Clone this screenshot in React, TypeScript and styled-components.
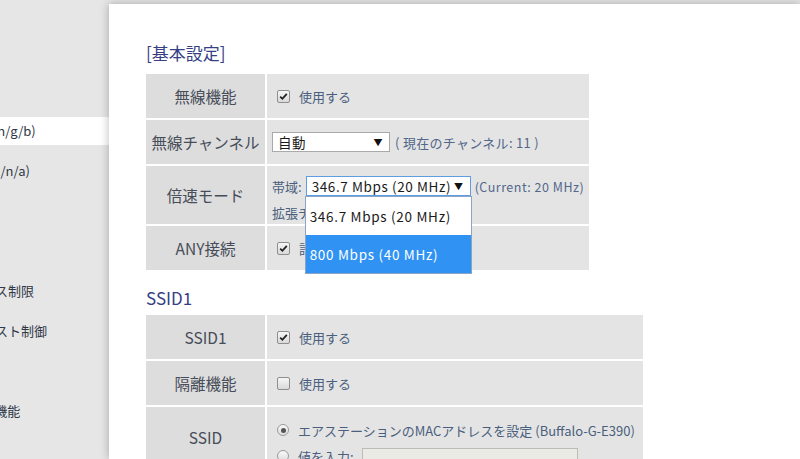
import React from "react";
import styled, { createGlobalStyle } from "styled-components";

const GlobalStyle = createGlobalStyle`
  html, body {
    margin: 0;
    padding: 0;
  }
  body {
    background: #e6e6e6;
    font-family: "Noto Sans CJK JP", "Noto Sans", sans-serif;
    overflow: hidden;
  }
`;

const menuItems = [
  "2.4 GHz (11n/g/b)",
  "5 GHz (11ac/n/a)",
  "WPS",
  "AOSS",
  "MACアクセス制限",
  "マルチキャスト制御",
  "WDS",
  "ECOモード機能",
];

const Page = styled.div`
  display: flex;
  height: 459px;
  overflow: hidden;
`;

const Sidebar = styled.nav`
  width: 109px;
  flex-shrink: 0;
  display: flex;
  justify-content: flex-end;
  overflow: hidden;
  padding-top: 117px;
`;

const MenuList = styled.ul`
  width: 179px;
  flex-shrink: 0;
  margin: 0;
  padding: 0;
  list-style: none;
  display: flex;
  flex-direction: column;
  gap: 12px;
`;

const MenuItem = styled.li<{ $active?: boolean }>`
  height: 28px;
  line-height: 28px;
  font-size: 13px;
  white-space: nowrap;
  color: #2f3747;
  background: ${({ $active }) => ($active ? "#ffffff" : "transparent")};
`;

const Main = styled.main`
  flex: 1;
  margin-top: 4px;
  background: #ffffff;
  box-shadow: 0 0 9px rgba(0, 0, 0, 0.28);
  padding: 37px 0 0 37px;
  position: relative;
  z-index: 1;
`;

const SectionTitle = styled.h2<{ $spaced?: boolean }>`
  margin: ${({ $spaced }) => ($spaced ? "16px 0 5px" : "0 0 9px")};
  font-size: 17px;
  line-height: 24px;
  font-weight: normal;
  color: #363f86;
`;

const Table = styled.div<{ $width: number }>`
  display: grid;
  grid-template-columns: 119px 1fr;
  gap: 2px;
  width: ${({ $width }) => $width}px;
`;

const HeadCell = styled.div`
  background: #dddddd;
  display: flex;
  align-items: center;
  justify-content: center;
  min-height: 44px;
  font-size: 15.5px;
  color: #464c58;
`;

const ValueCell = styled.div<{ $pad?: string }>`
  background: #e4e4e4;
  display: flex;
  flex-direction: column;
  justify-content: center;
  min-height: 44px;
  padding: ${({ $pad }) => $pad || "0 5px"};
  box-sizing: border-box;
  font-size: 13px;
  color: #4a5f7d;
`;

const Line = styled.div<{ $gap?: number }>`
  display: flex;
  align-items: center;
  height: 22px;
  gap: ${({ $gap }) => $gap ?? 0}px;
  white-space: nowrap;
`;

const Stack = styled.div`
  display: flex;
  flex-direction: column;
  gap: 4px;
`;

const Box = styled.span`
  width: 13px;
  height: 13px;
  margin-left: 5px;
  margin-right: 9px;
  box-sizing: border-box;
  border: 1px solid #8e8e8e;
  border-radius: 2px;
  background: linear-gradient(#f6f6f6, #d9d9d9);
  display: inline-flex;
  align-items: center;
  justify-content: center;
  flex-shrink: 0;
`;

const RadioDot = styled.span<{ $on?: boolean }>`
  width: 12px;
  height: 12px;
  margin-left: 5px;
  margin-right: 9px;
  box-sizing: border-box;
  border: 1px solid #9a9a9a;
  border-radius: 50%;
  background: linear-gradient(#f8f8f8, #dedede);
  display: inline-flex;
  align-items: center;
  justify-content: center;
  flex-shrink: 0;

  &::after {
    content: "";
    display: ${({ $on }) => ($on ? "block" : "none")};
    width: 5px;
    height: 5px;
    border-radius: 50%;
    background: #555;
  }
`;

const SelectWrap = styled.div`
  position: relative;
  display: inline-flex;
`;

const SelectBox = styled.div<{ $width: number; $focus?: boolean }>`
  width: ${({ $width }) => $width}px;
  height: 20px;
  box-sizing: border-box;
  border: 1px solid ${({ $focus }) => ($focus ? "#5e9de2" : "#a9a9a9")};
  background: #ffffff;
  display: flex;
  align-items: center;
  justify-content: space-between;
  padding: 0 6px 0 5px;
  font-size: 13.5px;
  letter-spacing: 0.6px;
  color: #1a1a1a;
`;

const Arrow = styled.span`
  font-size: 9px;
  color: #111;
`;

const Dropdown = styled.ul`
  position: absolute;
  top: 100%;
  left: -1px;
  width: 167px;
  margin: 0;
  padding: 0;
  list-style: none;
  box-sizing: border-box;
  border: 1px solid #8aa4c6;
  background: #ffffff;
  z-index: 5;
`;

const Option = styled.li<{ $active?: boolean }>`
  height: 38px;
  line-height: 38px;
  padding-left: 4px;
  font-size: 13.5px;
  letter-spacing: 0.7px;
  color: ${({ $active }) => ($active ? "#ffffff" : "#1a1a1a")};
  background: ${({ $active }) => ($active ? "#3092f3" : "#ffffff")};
`;

const Note = styled.span<{ $small?: boolean }>`
  font-size: ${({ $small }) => ($small ? "12.5px" : "13px")};
  letter-spacing: ${({ $small }) => ($small ? "0.5px" : "0.3px")};
  color: #52678a;
`;

const TextInput = styled.div`
  width: 216px;
  height: 22px;
  margin: 5px 0 0 8px;
  box-sizing: border-box;
  border: 1px solid #bdbdb7;
  background: #ebebe6;
`;

const Check = () => (
  <svg width="9" height="9" viewBox="0 0 9 9">
    <path d="M1.2 4.6 L3.4 6.8 L7.8 1.8" fill="none" stroke="#222" strokeWidth="1.8" />
  </svg>
);

const Checkbox = ({ checked }: { checked?: boolean }) => <Box>{checked && <Check />}</Box>;

export default function App() {
  return (
    <>
      <GlobalStyle />
      <Page>
        <Sidebar>
          <MenuList>
            {menuItems.map((item, i) => (
              <MenuItem key={item} $active={i === 0}>
                {item}
              </MenuItem>
            ))}
          </MenuList>
        </Sidebar>

        <Main>
          <SectionTitle>[基本設定]</SectionTitle>
          <Table $width={443}>
            <HeadCell>無線機能</HeadCell>
            <ValueCell>
              <Line>
                <Checkbox checked />
                使用する
              </Line>
            </ValueCell>

            <HeadCell>無線チャンネル</HeadCell>
            <ValueCell>
              <Line $gap={5}>
                <SelectBox $width={118}>
                  自動<Arrow>▼</Arrow>
                </SelectBox>
                <Note>( 現在のチャンネル: 11 )</Note>
              </Line>
            </ValueCell>

            <HeadCell>倍速モード</HeadCell>
            <ValueCell $pad="9px 5px 1px">
              <Stack>
                <Line $gap={4}>
                  帯域:
                  <SelectWrap>
                    <SelectBox $width={165} $focus>
                      346.7 Mbps (20 MHz)<Arrow>▼</Arrow>
                    </SelectBox>
                    <Dropdown>
                      <Option>346.7 Mbps (20 MHz)</Option>
                      <Option $active>800 Mbps (40 MHz)</Option>
                    </Dropdown>
                  </SelectWrap>
                  <Note $small>(Current: 20 MHz)</Note>
                </Line>
                <Line>拡張チャンネル: 7</Line>
              </Stack>
            </ValueCell>

            <HeadCell>ANY接続</HeadCell>
            <ValueCell>
              <Line>
                <Checkbox checked />
                許可する
              </Line>
            </ValueCell>
          </Table>

          <SectionTitle $spaced>SSID1</SectionTitle>
          <Table $width={497}>
            <HeadCell>SSID1</HeadCell>
            <ValueCell>
              <Line>
                <Checkbox checked />
                使用する
              </Line>
            </ValueCell>

            <HeadCell>隔離機能</HeadCell>
            <ValueCell>
              <Line>
                <Checkbox />
                使用する
              </Line>
            </ValueCell>

            <HeadCell>SSID</HeadCell>
            <ValueCell $pad="12px 5px 0">
              <Stack>
                <Line>
                  <RadioDot $on />
                  エアステーションのMACアドレスを設定 (Buffalo-G-E390)
                </Line>
                <Line>
                  <RadioDot />
                  値を入力:
                  <TextInput />
                </Line>
              </Stack>
            </ValueCell>
          </Table>
        </Main>
      </Page>
    </>
  );
}
